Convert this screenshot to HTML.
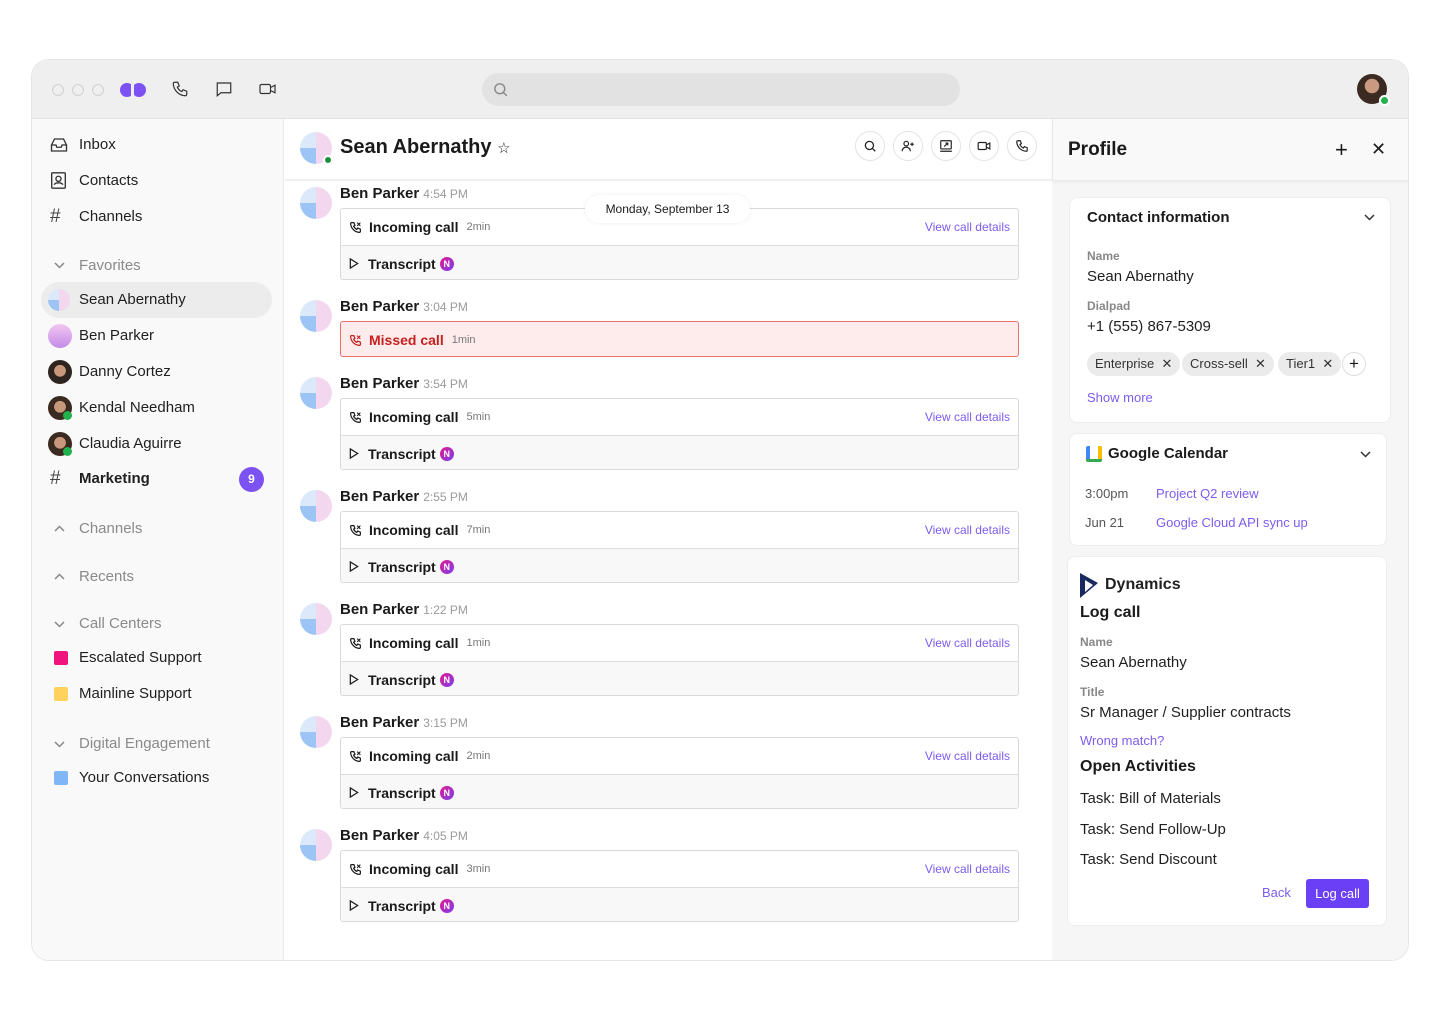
<!DOCTYPE html>
<html><head><meta charset="utf-8"><style>
*{box-sizing:border-box;margin:0;padding:0}
body{width:1440px;height:1020px;background:#fff;font-family:"Liberation Sans",sans-serif;color:#1a1a1a;position:relative;overflow:hidden}
.a{position:absolute}
.win{left:31px;top:59px;width:1378px;height:902px;border-radius:18px;border:1px solid #e6e6e6;overflow:hidden;background:#fff}
.top{left:0;top:0;width:1378px;height:59px;background:#efefef;border-bottom:1px solid #e2e2e2}
.side{left:0;top:59px;width:252px;height:843px;background:#f9f9f9;border-right:1px solid #e8e8e8}
.si{position:absolute;left:47px;font-size:15px;color:#1f1f1f;line-height:20px}
.sh{color:#8a8a8a}
.ic{position:absolute;left:18px}
.av{position:absolute;border-radius:50%;background:conic-gradient(#f3d7ee 0 50%,#9cc4f5 50% 75%,#dbe9fb 75%)}
.nm{position:absolute;left:340px;font-size:15px;font-weight:bold;line-height:18px}
.nm span{font-weight:normal;font-size:12px;color:#9a9a9a;margin-left:4px}
.card{position:absolute;left:340px;width:679px;border:1px solid #d9d9d9;border-radius:3px;overflow:hidden;background:#fff}
.row{height:36px;display:flex;align-items:center;padding:0 8px;font-size:14px;font-weight:bold;position:relative}
.row+.row{border-top:1px solid #dcdcdc;background:#f8f8f8}
.row small{font-weight:normal;font-size:11px;color:#777;margin-left:8px}
.row .v{position:absolute;right:8px;font-weight:normal;font-size:12px;color:#7c5cf0}
.ai{display:inline-block;width:14px;height:14px;border-radius:50%;background:linear-gradient(135deg,#e21a8a,#7b3ff2);margin-left:4px;color:#fff;font-size:9px;text-align:center;line-height:14px}
.ph{width:13px;height:13px;margin-right:7px}
.tr{width:10px;height:11px;margin-right:9px}
.rp{left:1020px;top:59px;width:358px;height:843px;background:#f6f6f7}
.box{position:absolute;background:#fff;border-radius:8px;border:1px solid #ededed}
.lbl{position:absolute;font-size:12px;font-weight:bold;color:#888}
.val{position:absolute;font-size:15px;color:#1f1f1f}
.tag{position:absolute;top:352px;height:24px;background:#ebebeb;border-radius:12px;font-size:13px;line-height:24px;padding:0 8px;color:#333}
.hb{position:absolute;top:131px;width:30px;height:30px;border-radius:50%;border:1px solid #e3e3e3;background:#fff}
</style></head><body>
<svg width="0" height="0" style="position:absolute"><defs><symbol id="ph" viewBox="0 0 24 24"><path d="M5 3h4l2 5-2.5 1.5a11 11 0 0 0 6 6L16 13l5 2v4a2 2 0 0 1-2 2A17 17 0 0 1 3 5a2 2 0 0 1 2-2" fill="none" stroke="currentColor" stroke-width="2.2"/><path d="M15 3l6 6M21 3l-6 6" stroke="currentColor" stroke-width="2" fill="none"/></symbol><symbol id="tr" viewBox="0 0 10 12"><path d="M1 1l8 5-8 5z" fill="none" stroke="#222" stroke-width="1.4"/></symbol></defs></svg>
<div class="a win">
 <div class="a top">
  <div class="a" style="left:20px;top:24px;width:12px;height:12px;border-radius:50%;border:1px solid #d0d0d0"></div>
  <div class="a" style="left:40px;top:24px;width:12px;height:12px;border-radius:50%;border:1px solid #d0d0d0"></div>
  <div class="a" style="left:60px;top:24px;width:12px;height:12px;border-radius:50%;border:1px solid #d0d0d0"></div>
  <svg class="a" style="left:87px;top:20px" width="28" height="20" viewBox="0 0 28 20"><circle cx="8" cy="10" r="7" fill="#7c52f2"/><circle cx="20" cy="10" r="7" fill="#7c52f2"/><rect x="12" y="3" width="3" height="16" fill="#efefef"/></svg>
  <svg class="a" style="left:139px;top:20px" width="18" height="18" viewBox="0 0 24 24" fill="none" stroke="#333" stroke-width="1.6"><path d="M5 3h4l2 5-2.5 1.5a11 11 0 0 0 6 6L16 13l5 2v4a2 2 0 0 1-2 2A17 17 0 0 1 3 5a2 2 0 0 1 2-2"/></svg>
  <svg class="a" style="left:183px;top:20px" width="18" height="18" viewBox="0 0 24 24" fill="none" stroke="#333" stroke-width="1.6"><path d="M3 4h18v13H8l-5 4z"/></svg>
  <svg class="a" style="left:226px;top:20px" width="19" height="18" viewBox="0 0 24 24" fill="none" stroke="#333" stroke-width="1.6"><rect x="2" y="6" width="14" height="12" rx="2"/><path d="M16 10l6-3v10l-6-3"/></svg>
  <div class="a" style="left:450px;top:13px;width:478px;height:33px;border-radius:17px;background:#e2e2e2"></div>
  <svg class="a" style="left:460px;top:21px" width="17" height="17" viewBox="0 0 24 24" fill="none" stroke="#888" stroke-width="2"><circle cx="11" cy="11" r="7"/><path d="M16 16l5 5"/></svg>
  <div class="a" style="left:1325px;top:14px;width:30px;height:30px;border-radius:50%;background:radial-gradient(circle at 50% 40%,#c99a80 0 30%,#3a2a22 32% 100%)"></div>
  <div class="a" style="left:1347px;top:35px;width:11px;height:11px;border-radius:50%;background:#22b14c;border:2px solid #fff"></div>
 </div>
 <div class="a side">
  <svg class="ic" style="top:18px" width="18" height="16" viewBox="0 0 24 20" fill="none" stroke="#333" stroke-width="1.8"><path d="M2 10l4-8h12l4 8v8H2zM2 10h6l1 3h6l1-3h6"/></svg>
  <div class="si" style="top:16px">Inbox</div>
  <svg class="ic" style="top:53px" width="17" height="17" viewBox="0 0 20 20" fill="none" stroke="#333" stroke-width="1.6"><rect x="2" y="1" width="16" height="18" rx="1"/><circle cx="10" cy="8" r="3"/><path d="M5 15c1-3 9-3 10 0"/></svg>
  <div class="si" style="top:52px">Contacts</div>
  <div class="ic" style="top:87px;font-size:19px;color:#444">#</div>
  <div class="si" style="top:88px">Channels</div>
  <svg class="ic" style="top:143px;left:22px" width="11" height="7" viewBox="0 0 11 7"><path d="M1 1l4.5 4.5L10 1" fill="none" stroke="#888" stroke-width="1.5"/></svg>
  <div class="si sh" style="top:137px">Favorites</div>
  <div class="a" style="left:9px;top:163px;width:231px;height:36px;border-radius:18px;background:#ececec"></div>
  <div class="av" style="left:16px;top:170px;width:22px;height:22px"></div>
  <div class="si" style="top:171px">Sean Abernathy</div>
  <div class="a" style="left:16px;top:205px;width:24px;height:24px;border-radius:50%;background:linear-gradient(180deg,#f3c6f0,#c48be8)"></div>
  <div class="si" style="top:207px">Ben Parker</div>
  <div class="a" style="left:16px;top:241px;width:24px;height:24px;border-radius:50%;background:radial-gradient(circle at 50% 45%,#c8987c 0 32%,#2e2520 34%)"></div>
  <div class="si" style="top:243px">Danny Cortez</div>
  <div class="a" style="left:16px;top:277px;width:24px;height:24px;border-radius:50%;background:radial-gradient(circle at 50% 45%,#c8987c 0 32%,#3a2a20 34%)"></div>
  <div class="a" style="left:31px;top:292px;width:9px;height:9px;border-radius:50%;background:#22b14c"></div>
  <div class="si" style="top:279px">Kendal Needham</div>
  <div class="a" style="left:16px;top:313px;width:24px;height:24px;border-radius:50%;background:radial-gradient(circle at 50% 45%,#c8987c 0 32%,#3a2a20 34%)"></div>
  <div class="a" style="left:31px;top:328px;width:9px;height:9px;border-radius:50%;background:#22b14c"></div>
  <div class="si" style="top:315px">Claudia Aguirre</div>
  <div class="ic" style="top:349px;font-size:19px;color:#444">#</div>
  <div class="si" style="top:350px;font-weight:bold">Marketing</div>
  <div class="a" style="left:207px;top:348px;width:25px;height:25px;border-radius:50%;background:#7c52f2;color:#fff;font-size:12px;text-align:center;line-height:25px;font-weight:bold">9</div>
  <svg class="ic" style="top:406px;left:22px" width="11" height="7" viewBox="0 0 11 7"><path d="M1 6l4.5-4.5L10 6" fill="none" stroke="#888" stroke-width="1.5"/></svg>
  <div class="si sh" style="top:400px">Channels</div>
  <svg class="ic" style="top:454px;left:22px" width="11" height="7" viewBox="0 0 11 7"><path d="M1 6l4.5-4.5L10 6" fill="none" stroke="#888" stroke-width="1.5"/></svg>
  <div class="si sh" style="top:448px">Recents</div>
  <svg class="ic" style="top:502px;left:22px" width="11" height="7" viewBox="0 0 11 7"><path d="M1 1l4.5 4.5L10 1" fill="none" stroke="#888" stroke-width="1.5"/></svg>
  <div class="si sh" style="top:495px">Call Centers</div>
  <div class="a" style="left:22px;top:532px;width:14px;height:14px;background:#f0157e;border-radius:2px"></div>
  <div class="si" style="top:529px">Escalated Support</div>
  <div class="a" style="left:22px;top:568px;width:14px;height:14px;background:#ffd25e;border-radius:2px"></div>
  <div class="si" style="top:565px">Mainline Support</div>
  <svg class="ic" style="top:622px;left:22px" width="11" height="7" viewBox="0 0 11 7"><path d="M1 1l4.5 4.5L10 1" fill="none" stroke="#888" stroke-width="1.5"/></svg>
  <div class="si sh" style="top:615px">Digital Engagement</div>
  <div class="a" style="left:22px;top:652px;width:14px;height:14px;background:#7fb6f7;border-radius:2px"></div>
  <div class="si" style="top:649px">Your Conversations</div>
 </div>
 <div class="a rp"></div>
 <div class="a" style="left:1020px;top:59px;width:358px;height:61px;background:#f9f9f9;box-shadow:0 2px 3px rgba(0,0,0,.06);border-left:1px solid #e8e8e8"></div>
 <div class="a" style="left:253px;top:119px;width:767px;height:2px;background:#f0f0f0"></div>
</div>

<!-- chat header -->
<div class="av" style="left:300px;top:132px;width:32px;height:32px"></div>
<div class="a" style="left:323px;top:155px;width:10px;height:10px;border-radius:50%;background:#1f8f3e;border:2px solid #fff"></div>
<div class="a" style="left:340px;top:136px;font-size:20px;font-weight:bold">Sean Abernathy <span style="font-size:15px;font-weight:normal">&#9734;</span></div>
<div class="hb" style="left:855px"></div><div class="hb" style="left:893px"></div><div class="hb" style="left:931px"></div><div class="hb" style="left:969px"></div><div class="hb" style="left:1007px"></div>
<svg class="a" style="left:863px;top:139px" width="14" height="14" viewBox="0 0 24 24" fill="none" stroke="#222" stroke-width="2.2"><circle cx="11" cy="11" r="7"/><path d="M16 16l5 5"/></svg>
<svg class="a" style="left:901px;top:139px" width="14" height="14" viewBox="0 0 24 24" fill="none" stroke="#222" stroke-width="2"><circle cx="9" cy="8" r="4"/><path d="M2 21c0-5 4-7 7-7s7 2 7 7M19 6v6M16 9h6"/></svg>
<svg class="a" style="left:939px;top:139px" width="14" height="14" viewBox="0 0 24 24" fill="none" stroke="#222" stroke-width="2"><rect x="3" y="3" width="18" height="14" rx="1"/><path d="M2 21h20M9 13l6-6M11 7h4v4"/></svg>
<svg class="a" style="left:977px;top:139px" width="14" height="14" viewBox="0 0 24 24" fill="none" stroke="#222" stroke-width="2"><rect x="2" y="6" width="14" height="12" rx="2"/><path d="M16 10l6-3v10l-6-3"/></svg>
<svg class="a" style="left:1015px;top:139px" width="14" height="14" viewBox="0 0 24 24" fill="none" stroke="#222" stroke-width="2"><path d="M5 3h4l2 5-2.5 1.5a11 11 0 0 0 6 6L16 13l5 2v4a2 2 0 0 1-2 2A17 17 0 0 1 3 5a2 2 0 0 1 2-2"/></svg>

<!-- messages -->
<div class="av" style="left:300px;top:187px;width:32px;height:32px"></div>
<div class="nm" style="top:185px">Ben Parker<span>4:54 PM</span></div>
<div class="card" style="top:208px;height:72px"><div class="row"><svg class="ph"><use href="#ph"/></svg>Incoming call<small>2min</small><span class="v">View call details</span></div><div class="row"><svg class="tr"><use href="#tr"/></svg>Transcript<span class="ai">N</span></div></div>
<div class="a" style="left:585px;top:195px;width:165px;height:28px;background:#fff;border-radius:14px;box-shadow:0 0 4px rgba(0,0,0,.08);font-size:12px;text-align:center;line-height:28px">Monday, September 13</div>

<div class="av" style="left:300px;top:300px;width:32px;height:32px"></div>
<div class="nm" style="top:298px">Ben Parker<span>3:04 PM</span></div>
<div class="card" style="top:321px;height:36px;background:#fdeceb;border-color:#e9706a"><div class="row" style="color:#c62020"><svg class="ph"><use href="#ph"/></svg>Missed call<small>1min</small></div></div>

<div class="av" style="left:300px;top:377px;width:32px;height:32px"></div>
<div class="nm" style="top:375px">Ben Parker<span>3:54 PM</span></div>
<div class="card" style="top:398px;height:72px"><div class="row"><svg class="ph"><use href="#ph"/></svg>Incoming call<small>5min</small><span class="v">View call details</span></div><div class="row"><svg class="tr"><use href="#tr"/></svg>Transcript<span class="ai">N</span></div></div>

<div class="av" style="left:300px;top:490px;width:32px;height:32px"></div>
<div class="nm" style="top:488px">Ben Parker<span>2:55 PM</span></div>
<div class="card" style="top:511px;height:72px"><div class="row"><svg class="ph"><use href="#ph"/></svg>Incoming call<small>7min</small><span class="v">View call details</span></div><div class="row"><svg class="tr"><use href="#tr"/></svg>Transcript<span class="ai">N</span></div></div>

<div class="av" style="left:300px;top:603px;width:32px;height:32px"></div>
<div class="nm" style="top:601px">Ben Parker<span>1:22 PM</span></div>
<div class="card" style="top:624px;height:72px"><div class="row"><svg class="ph"><use href="#ph"/></svg>Incoming call<small>1min</small><span class="v">View call details</span></div><div class="row"><svg class="tr"><use href="#tr"/></svg>Transcript<span class="ai">N</span></div></div>

<div class="av" style="left:300px;top:716px;width:32px;height:32px"></div>
<div class="nm" style="top:714px">Ben Parker<span>3:15 PM</span></div>
<div class="card" style="top:737px;height:72px"><div class="row"><svg class="ph"><use href="#ph"/></svg>Incoming call<small>2min</small><span class="v">View call details</span></div><div class="row"><svg class="tr"><use href="#tr"/></svg>Transcript<span class="ai">N</span></div></div>

<div class="av" style="left:300px;top:829px;width:32px;height:32px"></div>
<div class="nm" style="top:827px">Ben Parker<span>4:05 PM</span></div>
<div class="card" style="top:850px;height:72px"><div class="row"><svg class="ph"><use href="#ph"/></svg>Incoming call<small>3min</small><span class="v">View call details</span></div><div class="row"><svg class="tr"><use href="#tr"/></svg>Transcript<span class="ai">N</span></div></div>

<!-- profile -->
<div class="a" style="left:1068px;top:139px;font-size:19px;font-weight:bold">Profile</div>
<div class="a" style="left:1335px;top:137px;font-size:22px;font-weight:300">+</div>
<div class="a" style="left:1371px;top:139px;font-size:18px">✕</div>

<div class="box" style="left:1069px;top:197px;width:322px;height:226px"></div>
<div class="a" style="left:1087px;top:209px;font-size:15px;font-weight:bold">Contact information</div>
<svg class="a" style="left:1364px;top:214px" width="11" height="7" viewBox="0 0 11 7"><path d="M1 1l4.5 4.5L10 1" fill="none" stroke="#333" stroke-width="1.5"/></svg>
<div class="lbl" style="left:1087px;top:249px">Name</div>
<div class="val" style="left:1087px;top:268px">Sean Abernathy</div>
<div class="lbl" style="left:1087px;top:299px">Dialpad</div>
<div class="val" style="left:1087px;top:318px">+1 (555) 867-5309</div>
<div class="tag" style="left:1087px">Enterprise &nbsp;✕</div>
<div class="tag" style="left:1182px">Cross-sell &nbsp;✕</div>
<div class="tag" style="left:1278px">Tier1 &nbsp;✕</div>
<div class="a" style="left:1342px;top:352px;width:24px;height:24px;border-radius:50%;border:1px solid #ddd;background:#fff;text-align:center;line-height:21px;font-size:17px">+</div>
<div class="a" style="left:1087px;top:390px;font-size:13px;color:#7c5cf0">Show more</div>

<div class="box" style="left:1069px;top:433px;width:318px;height:113px"></div>
<div class="a" style="left:1086px;top:446px;width:16px;height:16px;border-radius:2px;background:linear-gradient(90deg,#4285f4 0 25%,#fff 25% 75%,#fbbc04 75%);border-bottom:3px solid #34a853"></div>
<div class="a" style="left:1108px;top:445px;font-size:15px;font-weight:bold">Google Calendar</div>
<svg class="a" style="left:1360px;top:451px" width="11" height="7" viewBox="0 0 11 7"><path d="M1 1l4.5 4.5L10 1" fill="none" stroke="#333" stroke-width="1.5"/></svg>
<div class="a" style="left:1085px;top:486px;font-size:13px;color:#555">3:00pm</div>
<div class="a" style="left:1156px;top:486px;font-size:13px;color:#7c5cf0">Project Q2 review</div>
<div class="a" style="left:1085px;top:515px;font-size:13px;color:#555">Jun 21</div>
<div class="a" style="left:1156px;top:515px;font-size:13px;color:#7c5cf0">Google Cloud API sync up</div>

<div class="box" style="left:1067px;top:556px;width:320px;height:370px"></div>
<svg class="a" style="left:1080px;top:573px" width="18" height="25" viewBox="0 0 18 25"><path d="M0 0l18 10L0 25z" fill="#1b2a5e"/><path d="M5 7l8 5-8 7z" fill="#fff"/></svg>
<div class="a" style="left:1105px;top:576px;font-size:16px;font-weight:bold;color:#222">Dynamics</div>
<div class="a" style="left:1080px;top:604px;font-size:16px;font-weight:bold">Log call</div>
<div class="lbl" style="left:1080px;top:635px">Name</div>
<div class="val" style="left:1080px;top:654px">Sean Abernathy</div>
<div class="lbl" style="left:1080px;top:685px">Title</div>
<div class="val" style="left:1080px;top:704px">Sr Manager / Supplier contracts</div>
<div class="a" style="left:1080px;top:733px;font-size:13px;color:#7c5cf0">Wrong match?</div>
<div class="a" style="left:1080px;top:758px;font-size:16px;font-weight:bold">Open Activities</div>
<div class="val" style="left:1080px;top:790px">Task: Bill of Materials</div>
<div class="val" style="left:1080px;top:821px">Task: Send Follow-Up</div>
<div class="val" style="left:1080px;top:851px">Task: Send Discount</div>
<div class="a" style="left:1262px;top:885px;font-size:13px;color:#7c5cf0">Back</div>
<div class="a" style="left:1306px;top:879px;width:63px;height:29px;border-radius:3px;background:#6b3ff5;color:#fff;font-size:13px;text-align:center;line-height:29px">Log call</div>
</body></html>
